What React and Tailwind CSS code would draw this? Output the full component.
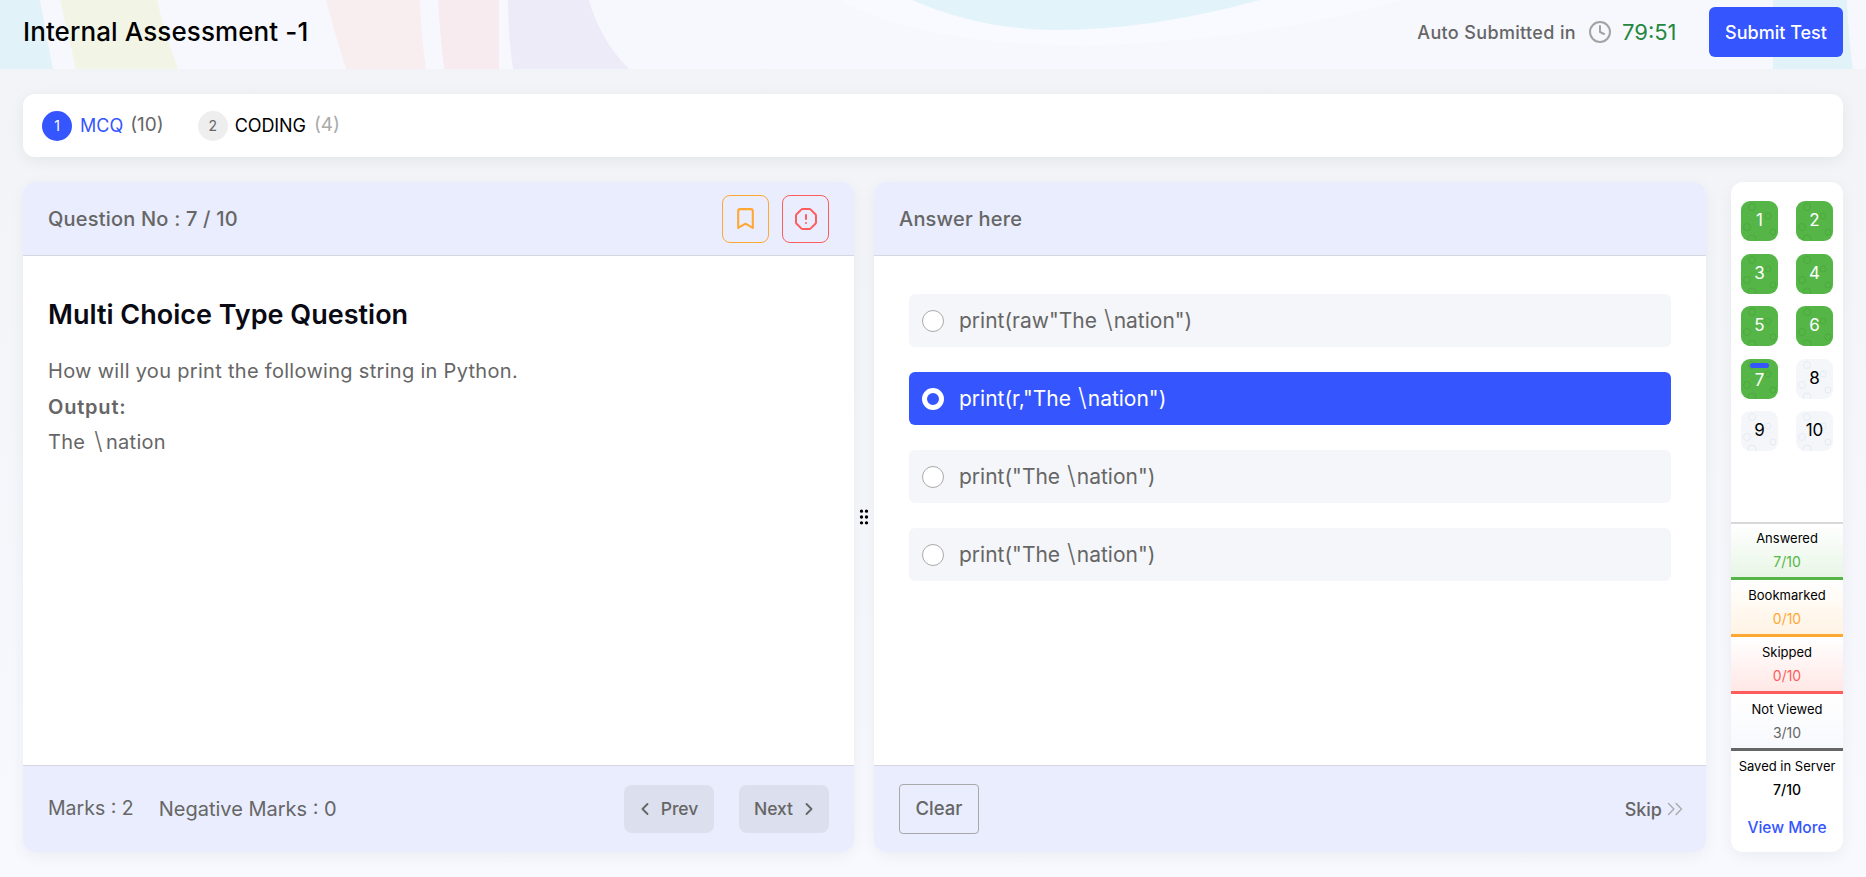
import React from "react";
import { Bookmark, OctagonAlert, ChevronLeft, ChevronRight, ChevronsRight, Clock, GripVertical } from "lucide-react";

const options = [
  { before: 'print(raw"The ', after: 'nation")' },
  { before: 'print(r,"The ', after: 'nation")', selected: true },
  { before: 'print("The ', after: 'nation")' },
  { before: 'print("The ', after: 'nation")' },
];

const legend = [
  { label: "Answered", value: "7/10", box: "h-[56px] pt-[3px] to-[#e8f6e6] border-[#55b647]", text: "text-[#55b647]" },
  { label: "Bookmarked", value: "0/10", box: "h-[57px] pt-[4px] to-[#fff3e4] border-[#ffa733]", text: "text-[#ffa733]" },
  { label: "Skipped", value: "0/10", box: "h-[57px] pt-[4px] to-[#ffe8e6] border-[#ff5c5c]", text: "text-[#ff5c5c]" },
  { label: "Not Viewed", value: "3/10", box: "h-[57px] pt-[4px] to-[#f8f9fd] border-[#666666]", text: "text-[#666666]" },
];

function HeaderArt() {
  return (
    <svg className="absolute inset-0 h-full w-full" viewBox="0 0 1866 69" preserveAspectRatio="none">
      <path d="M0 0H40Q46 35 53 69H0Z" fill="#e1f3f8" />
      <path d="M60 0H157Q165 35 178 69H76Q68 35 60 0Z" fill="#f2f5e6" />
      <path d="M326 0H420Q421 35 426 69H346Q335 35 326 0Z" fill="#f8eef0" />
      <path d="M438 0H499V69H444Q440 35 438 0Z" fill="#f7ebef" />
      <path d="M508 0H589Q600 40 629 69H513Q508 35 508 0Z" fill="#eeebf9" />
      <path d="M840 0Q930 48 1100 45Q1260 40 1400 0Z" fill="#f9faff" />
      <path d="M912 0Q980 30 1057 30Q1150 30 1260 0Z" fill="#e2f3fa" />
      <path d="M1773 0H1847Q1848 35 1853 69H1773Z" fill="#e1f3f8" />
    </svg>
  );
}

// the backslash is tall and airy in the reference
function Slash({ wide }) {
  return <span className={`${wide ? "mx-[3px]" : "mx-[1px]"} text-[1.2em] font-light leading-none`}>\</span>;
}

function NumButton({ n, done, current }) {
  const ring = done ? "#4da83f" : "#e6eaf2";
  return (
    <div
      className={`relative flex h-[40px] w-[37px] items-center justify-center overflow-hidden rounded-[9px] text-[17px] ${
        done ? "bg-[#55b647] text-white" : "bg-[#f4f6fa] text-black"
      }`}
    >
      <svg className="absolute inset-0" width="37" height="40" fill="none" stroke={ring} strokeWidth="1">
        <circle cx="11" cy="6" r="3.5" />
        <circle cx="27" cy="15" r="3" />
        <circle cx="6" cy="26" r="3.5" />
        <circle cx="32" cy="31" r="3" />
        <circle cx="11" cy="38" r="4" />
      </svg>
      {current && <span className="absolute left-[9px] top-[4px] h-[5px] w-[19px] rounded-full bg-[#3555ff]" />}
      <span className={`relative ${current ? "mt-[5px]" : ""}`}>{n}</span>
    </div>
  );
}

function App() {
  return (
    <div className="h-[877px] w-full overflow-hidden bg-gradient-to-b from-[#f2f3f7] to-[#f8f9fe] font-[family-name:Inter,sans-serif] text-[#666666]">
      <header className="relative flex h-[69px] items-center bg-[#f7f8fd] pb-[5px] pl-[23px] pr-[23px]">
        <HeaderArt />
        <h1 className="relative pb-[1px] text-[26px] font-medium tracking-[0.1px] text-black">Internal Assessment -1</h1>
        <div className="relative ml-auto flex items-center">
          <span className="text-[18px] font-medium tracking-[0.35px]">Auto Submitted in</span>
          <Clock size={24} strokeWidth={2} className="ml-[12px] text-[#a3a3a3]" />
          <span className="ml-[10px] w-[87px] text-[22px] text-[#23873f]">79:51</span>
          <button className="h-[50px] w-[134px] rounded-[6px] bg-[#3555ff] text-[18px] font-medium text-white">
            Submit Test
          </button>
        </div>
      </header>

      <main className="px-[23px] pt-[25px]">
        <div className="flex h-[63px] items-center rounded-[12px] bg-white pl-[19px] text-[18px] shadow-[0_4px_16px_rgba(0,0,0,0.06)]">
          <span className="flex h-[30px] w-[30px] items-center justify-center rounded-full bg-[#3555ff] text-[14px] text-white">1</span>
          <span className="ml-[8px] text-[#3555ff]">MCQ</span>
          <span className="ml-[7px] text-[19px]">(10)</span>
          <span className="ml-[34px] flex h-[30px] w-[30px] items-center justify-center rounded-full bg-[#eeeeee] text-[14px]">2</span>
          <span className="ml-[7px] tracking-[-0.1px] text-black">CODING</span>
          <span className="ml-[8px] text-[19px] text-[#aaaaaa]">(4)</span>
        </div>

        <div className="mt-[25px] flex h-[670px]">
          <section className="flex w-[831px] flex-col overflow-hidden rounded-[12px] bg-white shadow-[0_4px_16px_rgba(0,0,0,0.05)]">
            <div className="flex h-[74px] shrink-0 items-center border-b border-[#d6d7e0] bg-[#e9edfd] pl-[25px] pr-[25px]">
              <span className="pt-[1px] text-[20px] font-medium tracking-[0.2px]">Question No : 7 / 10</span>
              <button className="ml-auto flex h-[48px] w-[47px] items-center justify-center rounded-[8px] border border-[#ffa733] text-[#ffa733]">
                <Bookmark size={25} strokeWidth={2} />
              </button>
              <button className="ml-[13px] flex h-[48px] w-[47px] items-center justify-center rounded-[8px] border border-[#ff5c5c] text-[#ff5c5c]">
                <OctagonAlert size={24} strokeWidth={2} />
              </button>
            </div>
            <div className="flex-1 px-[25px] pt-[42px]">
              <h2 className="text-[27px] font-semibold leading-[34px] text-[#0a0a14]">Multi Choice Type Question</h2>
              <div className="mt-[22px] text-[20px] leading-[35.5px] tracking-[0.3px]">
                <p>How will you print the following string in Python.</p>
                <p className="font-semibold tracking-[0.8px]">Output:</p>
                <p>The <Slash wide />nation</p>
              </div>
            </div>
            <div className="flex h-[87px] shrink-0 items-center border-t border-[#d6d7e0] bg-[#e9edfd] pl-[25px] pr-[25px] text-[20px]">
              <span className="text-[19.5px]">Marks : 2</span>
              <span className="ml-[25px]">Negative Marks : 0</span>
              <button className="ml-auto flex h-[48px] w-[90px] items-center justify-center gap-[6px] rounded-[8px] bg-[#dcdfed] pr-[5px] text-[17.5px] font-medium">
                <ChevronLeft size={20} strokeWidth={2.25} />
                Prev
              </button>
              <button className="ml-[25px] flex h-[48px] w-[90px] items-center justify-center gap-[6px] rounded-[8px] bg-[#dcdfed] pl-[5px] text-[17.5px] font-medium">
                Next
                <ChevronRight size={20} strokeWidth={2.25} />
              </button>
            </div>
          </section>

          <div className="flex w-[20px] shrink-0 items-center justify-center text-black">
            <GripVertical size={24} />
          </div>

          <section className="flex w-[832px] flex-col overflow-hidden rounded-[12px] bg-white shadow-[0_4px_16px_rgba(0,0,0,0.05)]">
            <div className="flex h-[74px] shrink-0 items-center border-b border-[#d6d7e0] bg-[#e9edfd] pl-[25px]">
              <span className="pt-[1px] text-[20px] font-medium tracking-[0.2px]">Answer here</span>
            </div>
            <div className="flex flex-1 flex-col gap-[25px] pl-[35px] pr-[35px] pt-[38px]">
              {options.map((o, i) => (
                <div
                  key={i}
                  className={`flex h-[53px] items-center whitespace-pre rounded-[6px] pl-[13px] text-[21px] ${
                    o.selected ? "bg-[#3555ff] text-white" : "bg-[#f5f6fa]"
                  }`}
                >
                  <span
                    className={`h-[22px] w-[22px] rounded-full ${
                      o.selected ? "border-[5px] border-white" : "border border-[#aaaaaa] bg-white"
                    }`}
                  />
                  <span className="ml-[15px]">
                    {o.before}
                    <Slash />
                    {o.after}
                  </span>
                </div>
              ))}
            </div>
            <div className="flex h-[87px] shrink-0 items-center border-t border-[#d6d7e0] bg-[#e9edfd] pl-[25px] pr-[18px]">
              <button className="h-[50px] w-[80px] rounded-[4px] border border-[#a8a8a8] text-[18.5px] font-medium">Clear</button>
              <span className="ml-auto text-[18px] font-medium">Skip</span>
              <ChevronsRight size={26} strokeWidth={1.25} className="text-[#aaaaaa]" />
            </div>
          </section>

          <aside className="ml-[25px] flex w-[112px] shrink-0 flex-col overflow-hidden rounded-[12px] bg-white shadow-[0_4px_16px_rgba(0,0,0,0.05)]">
            <div className="grid grid-cols-[37px_37px] justify-between gap-y-[12.5px] pl-[10px] pr-[10px] pt-[19px]">
              {[1, 2, 3, 4, 5, 6, 7, 8, 9, 10].map((n) => (
                <NumButton key={n} n={n} done={n <= 7} current={n === 7} />
              ))}
            </div>
            <div className="mt-auto border-t-2 border-[#d8d8d8] text-center text-[13px]">
              {legend.map((l) => (
                <div key={l.label} className={`border-b-[3px] bg-gradient-to-b from-white ${l.box}`}>
                  <div className="leading-[23px] text-black">{l.label}</div>
                  <div className={`text-[14px] leading-[23px] ${l.text}`}>{l.value}</div>
                </div>
              ))}
              <div className="h-[101px] pt-[4px]">
                <div className="leading-[23px] text-black">Saved in Server</div>
                <div className="text-[14px] font-medium leading-[23px] text-black">7/10</div>
                <div className="mt-[15px] text-[15.5px] font-medium leading-[23px] text-[#3555ff]">View More</div>
              </div>
            </div>
          </aside>
        </div>
      </main>
    </div>
  );
}

export default App;
